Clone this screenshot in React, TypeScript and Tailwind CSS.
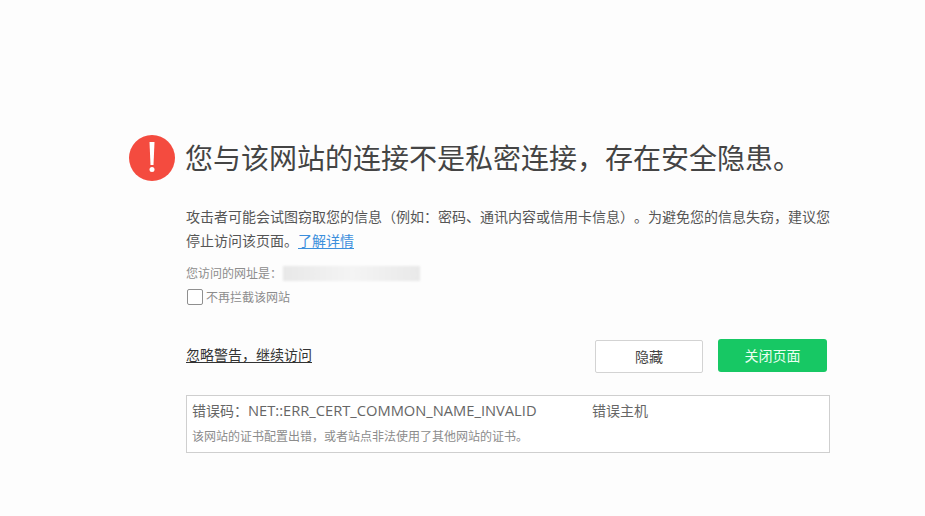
import React from 'react';

const cjk = 'font-["Noto_Sans_CJK_SC","Liberation_Sans",sans-serif]';

export default function App() {
  return (
    <div className={`w-[925px] h-[516px] overflow-hidden bg-[#fdfdfd] pt-[134px] pl-[129px] ${cjk}`}>
      {/* Heading */}
      <div className="flex items-center gap-[10px] h-[47px]">
        <svg width="46" height="46" viewBox="0 0 46 46" className="shrink-0">
          <circle cx="23" cy="23" r="23" fill="#f44b3f" />
          <path d="M20.500 7h5l-1 23h-3z" fill="#fff" />
          <circle cx="23" cy="34.500" r="2.500" fill="#fff" />
        </svg>
        <h1 className="text-[28px] leading-[47px] font-normal text-[#444] whitespace-nowrap">
          您与该网站的连接不是私密连接，存在安全隐患。
        </h1>
      </div>

      <div className="ml-[57px] w-[645px]">
        {/* Description */}
        <p className="mt-[23px] text-[14px] leading-[24px] text-[#555] [text-spacing-trim:space-all]">
          攻击者可能会试图窃取您的信息（例如：密码、通讯内容或信用卡信息）。为避免您的信息失窃，建议您停止访问该页面。
          <a className="text-[#3c8fdc] underline underline-offset-2">了解详情</a>
        </p>

        {/* Visited url */}
        <div className="mt-[11px] flex items-center h-[20px] text-[12px] text-[#8c8c8c] [text-spacing-trim:space-all]">
          <span className="w-[97px] whitespace-nowrap">您访问的网址是：</span>
          <div className="w-[137px] h-[15px] bg-gradient-to-r from-[#e8e8e8] via-[#f4f4f4] to-[#e9e9e9] blur-[1px]" />
        </div>

        {/* Checkbox */}
        <label className="mt-[4px] flex items-center h-[20px] text-[12px] text-[#8c8c8c]">
          <span className="ml-[1px] w-[16px] h-[16px] rounded-[2px] border border-[#8f8f8f] bg-white" />
          <span className="ml-[3px]">不再拦截该网站</span>
        </label>

        {/* Actions */}
        <div className="mt-[32px] flex items-start justify-between pr-[4px]">
          <a className="mt-[5px] text-[14px] leading-[20px] text-[#333] underline underline-offset-2 [text-spacing-trim:space-all]">忽略警告，继续访问</a>
          <div className="flex items-start gap-[15px]">
            <button className="mt-[1px] w-[108px] h-[33px] bg-white border border-[#d3d3d3] rounded-[2px] text-[14px] text-[#444]">
              隐藏
            </button>
            <button className="w-[109px] h-[33px] bg-[#17c864] rounded-[3px] text-[14px] text-[#eafff2]">
              关闭页面
            </button>
          </div>
        </div>

        {/* Error box */}
        <div className="mt-[22px] h-[58px] w-[644px] border border-[#cfcfcf] bg-white px-[5px] pt-[3px]">
          <div className="flex h-[22px] items-center text-[14px] text-[#666] whitespace-nowrap [text-spacing-trim:space-all]">
            <span className="w-[400px]">错误码：<span className="font-['Open_Sans'] text-[14.7px]">NET::ERR_CERT_COMMON_NAME_INVALID</span></span>
            <span>错误主机</span>
          </div>
          <div className="mt-[6px] text-[12px] leading-[18px] text-[#8c8c8c]">
            该网站的证书配置出错，或者站点非法使用了其他网站的证书。
          </div>
        </div>
      </div>
    </div>
  );
}
